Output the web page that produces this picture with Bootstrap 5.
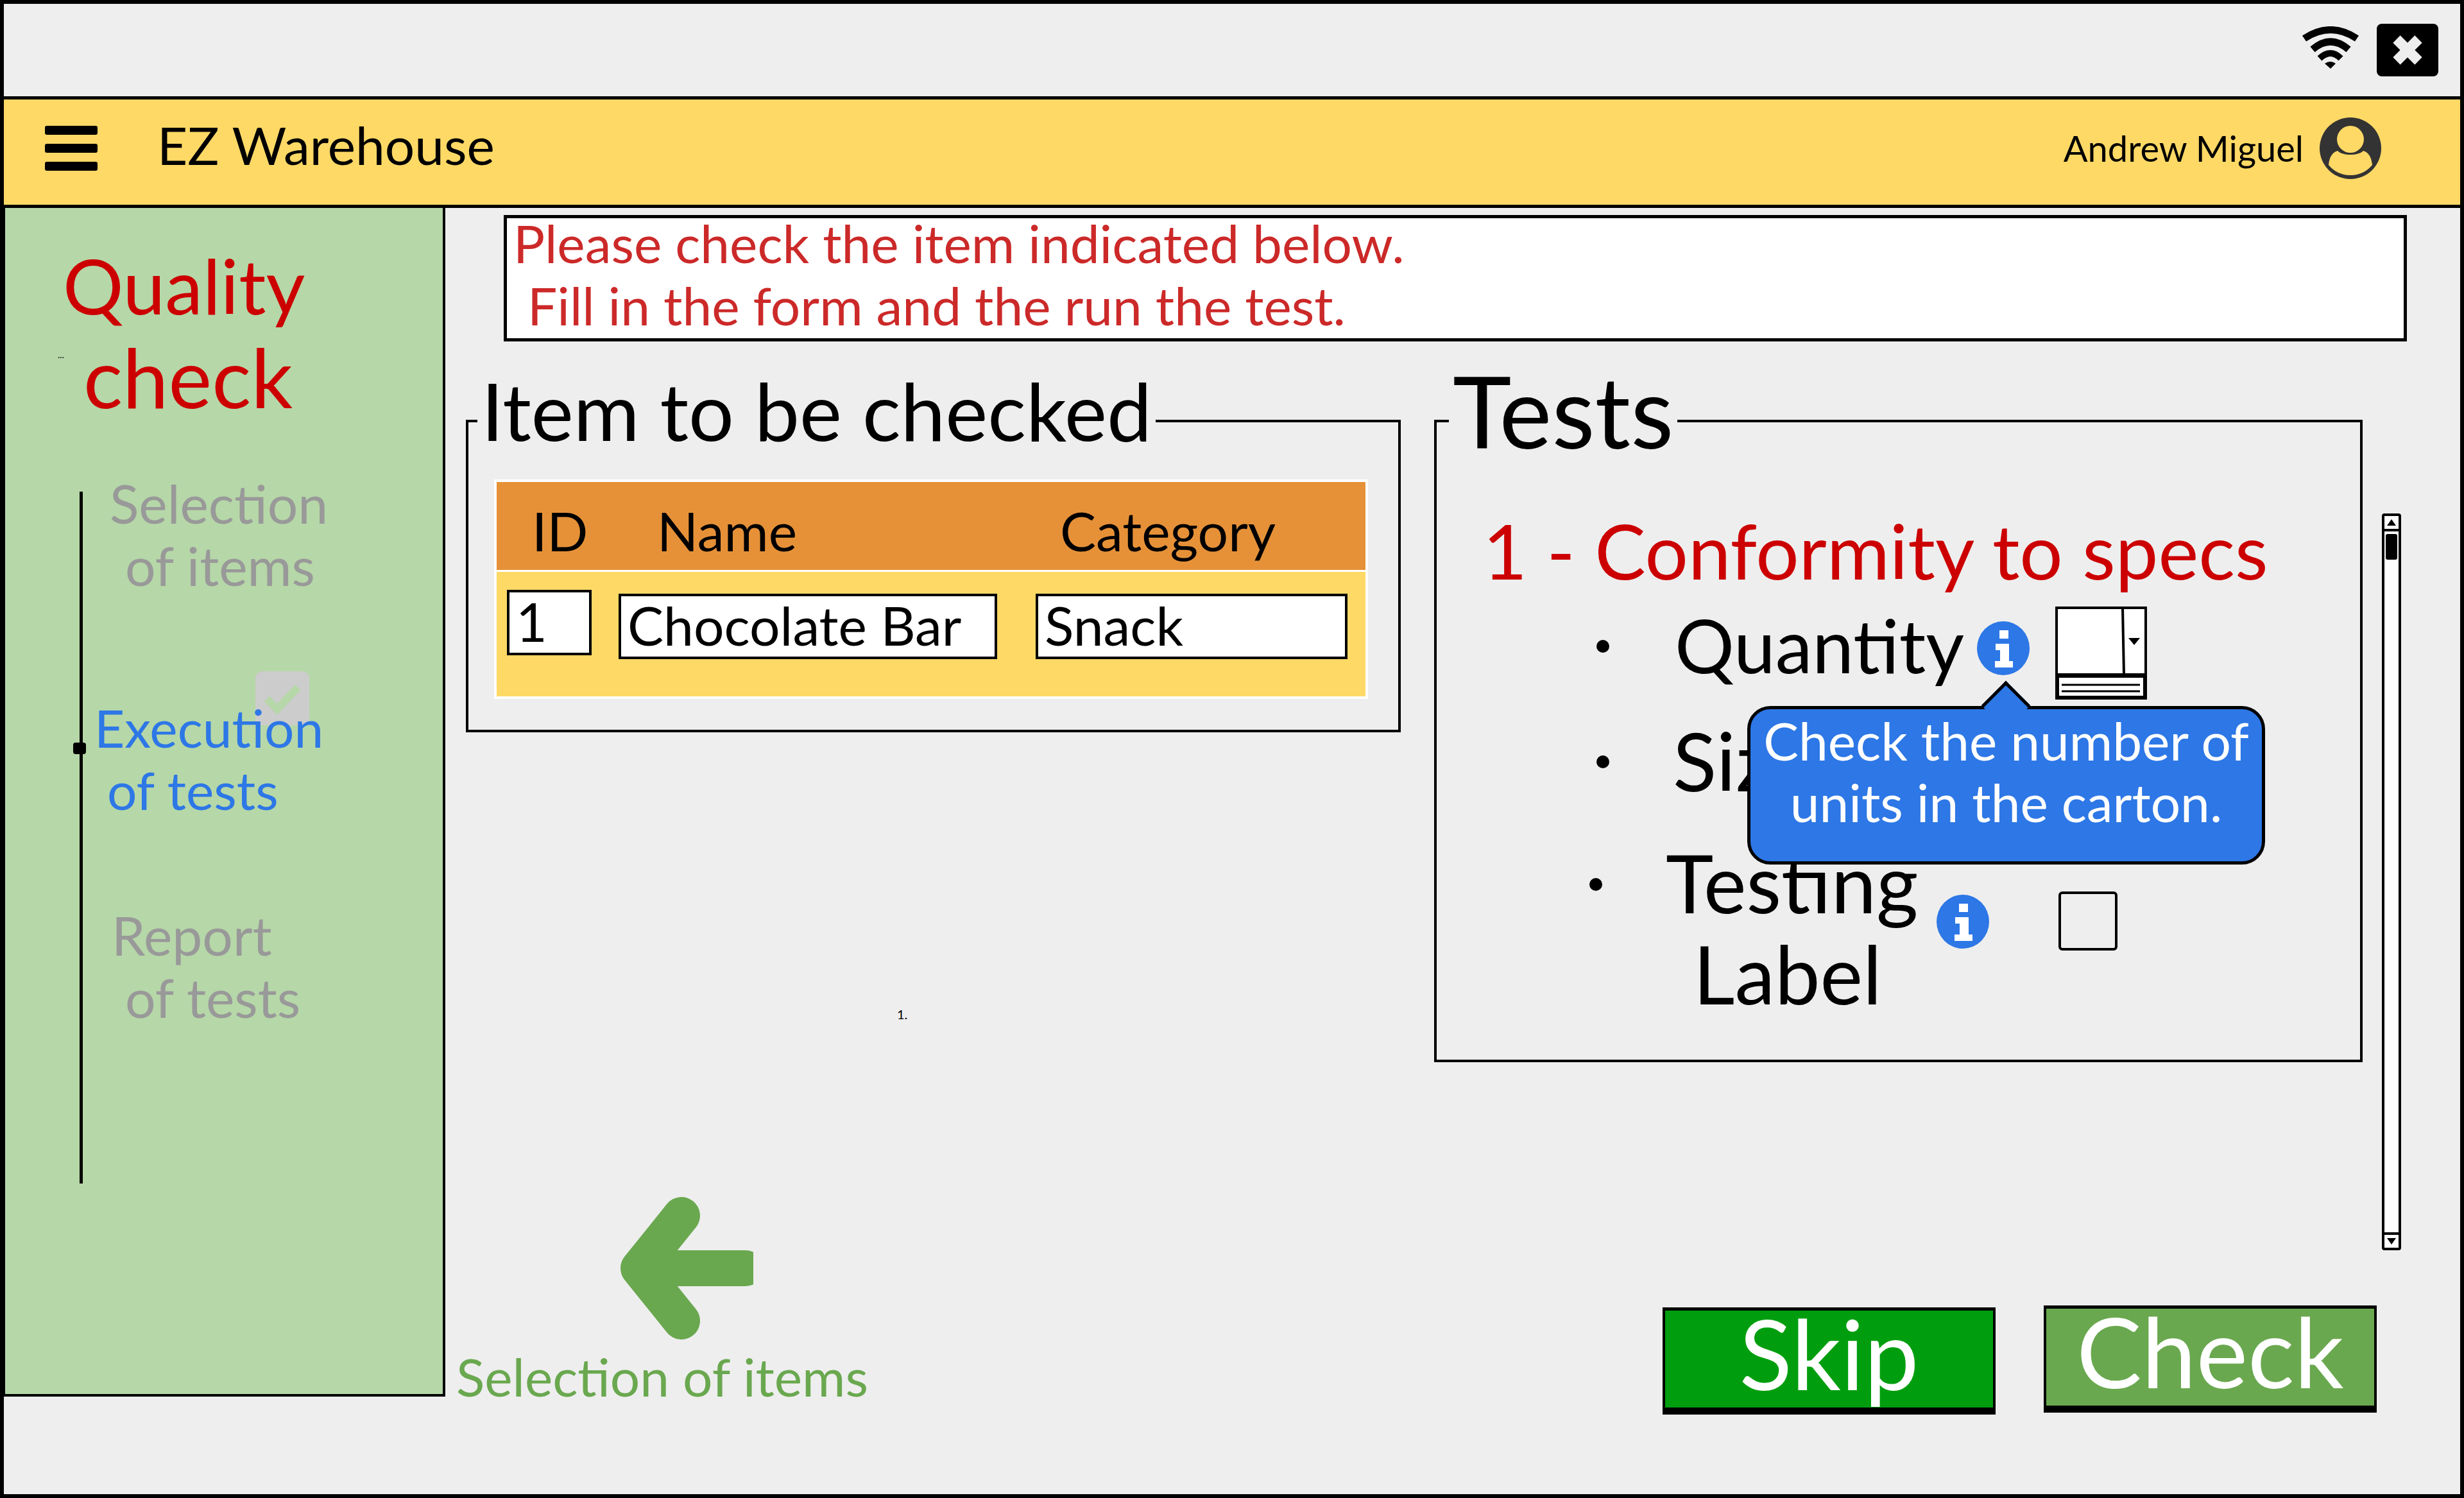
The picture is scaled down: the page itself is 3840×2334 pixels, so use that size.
<!DOCTYPE html>
<html lang="en">
<head>
    <meta charset="UTF-8">
    <meta name="viewport" content="width=device-width, initial-scale=1.0">
    <title>EZ Warehouse - Quality check</title>
    <link href="https://cdn.jsdelivr.net/npm/bootstrap@5.3.0/dist/css/bootstrap.min.css" rel="stylesheet">
    <style>
        body { margin: 0; background: #eee; font-family: "Lato", "Liberation Sans", sans-serif; color: #000; }
        .app-frame { width: 3840px; height: 2334px; border: 6px solid #000; background: #eee; overflow: hidden; }

        /* top strip */
        .status-strip { height: 144px; padding-right: 34px; gap: 26px; }
        .status-strip svg { margin-bottom: 8px; }
        .close-box { width: 96px; height: 82px; background: #000; border-radius: 8px; }
        .close-box svg { margin-bottom: 0; }

        /* yellow header */
        .app-header { height: 174px; background: #ffd966; border-top: 5px solid #000; border-bottom: 5px solid #000; padding: 0 123px 12px 64px; }
        .burger { width: 82px; gap: 14px; margin-right: 93px; }
        .burger span { height: 14px; background: #000; border-radius: 3px; }
        .app-title { font-size: 82px; line-height: 1; margin-bottom: 12px; }
        .user-name { font-size: 56px; margin-right: 25px; }

        /* sidebar */
        .side-panel { width: 688px; height: 1852px; background: #b6d7a8; border-right: 4px solid #000; border-bottom: 4px solid #000; border-left: 2px solid #000; padding-top: 50px; }
        .side-title { line-height: 142px; color: #c00; }
        .title-one { font-size: 118px; padding-left: 90px; }
        .title-two { font-size: 128px; padding-left: 122px; }
        .side-dots { left: 82px; top: 222px; font-size: 14px; line-height: 1; }
        .steps-rail { display: flow-root; margin: 108px 0 0 116px; height: 1078px; border-left: 5px solid #000; }
        .step-dot { left: -15px; top: 391px; width: 20px; height: 18px; background: #000; border-radius: 4px; }
        .step-list { margin-top: -31px; position: relative; z-index: 1; }
        .step-item { font-size: 84px; line-height: 97px; color: #999; height: 350px; }
        .step-item.on-step { color: #2d77e6; height: 323px; font-size: 82px; }
        .line-in-18 { padding-left: 18px; }
        .line-in-38 { padding-left: 38px; }
        .line-in-42 { padding-left: 42px; }
        .line-in-45 { padding-left: 45px; }
        .line-in-67 { padding-left: 66px; }
        .done-mark { left: 269px; top: 280px; width: 84px; height: 84px; background: #ccc; border-radius: 10px; }

        /* main */
        .main-area { padding-left: 32px; }
        .notice-box { margin: 11px 0 0 59px; width: 2966px; height: 197px; background: #fff; border: 5px solid #000; color: #cc2929; font-size: 82px; line-height: 97px; padding: 0 10px; }
        .notice-box div:first-child { margin-top: -10px; }
        .notice-box div + div { padding-left: 22px; }
        .work-row { margin-top: 59px; }
        .left-col { width: 1457px; }
        .right-col { width: 1447px; margin-left: 52px; }
        .box-set { border: 4px solid #000; margin: 0; padding: 0; min-width: 0; }
        .box-set legend { float: none; width: auto; position: relative; top: -17px; padding: 0 6px; font-size: 125px; line-height: 130px; }
        .left-set { height: 550px; padding: 26px 40px 0 40px; }
        .left-set legend { margin: 0 0 0 -26px; }

        /* item table */
        .item-table { width: 1362px; table-layout: fixed; border-collapse: separate; border-spacing: 0; border: 4px solid #fff; font-size: 84px; }
        .item-table th { background: #e69138; font-weight: 400; height: 140px; padding: 14px 0 0 55px; border-bottom: 3px solid #fff; line-height: 1; }
        .item-table td { background: #ffd966; height: 194px; padding: 0; vertical-align: top; line-height: 1; }
        .item-table .c-id { width: 195px; }
        .item-table .c-name { width: 650px; }
        .item-table th.c-cat { padding-left: 33px; }
        .cell-box { display: block; background: #fff; border: 4px solid #000; height: 102px; line-height: 90px; padding: 0 10px; white-space: nowrap; margin: 34px 0 0 -5px; }
        .cell-id { width: 132px; margin: 28px 0 0 16px; }
        .cell-name { width: 590px; }
        .cell-cat { width: 486px; }

        /* back link */
        .back-link { color: #6aa84f; font-size: 82px; line-height: 1; margin: 723px 0 0 -15px; }
        .back-link svg { margin-left: 251px; }
        .back-link span { margin-top: 15px; }
        .stray-num { left: 672px; top: 979px; font-size: 20px; line-height: 1; }

        /* tests */
        .tests-set { height: 1064px; padding: 0 0 0 72px; }
        .tests-set legend { font-size: 155px; margin: 0 0 0 -53px; }
        .spec-title { font-size: 119px; line-height: 120px; color: #c00; margin: 76px 0 28px 0; }
        .test-list { list-style: none; padding: 0; margin: 0; font-size: 126px; line-height: 142px; }
        .test-row { position: relative; }
        .test-bullet { width: 20px; height: 20px; background: #000; border-radius: 50%; position: absolute; }
        .row-quantity { height: 145px; padding-left: 299px; font-size: 116px; line-height: 120px; }
        .row-quantity .test-bullet { left: 177px; top: 52px; }
        .row-quantity .info-mark { margin: 23px 40px 0 20px; }
        .row-size { height: 214px; padding: 24px 0 0 296px; }
        .row-size .test-bullet { left: 177px; top: 87px; }
        .row-label { padding-left: 285px; }
        .row-label .test-bullet { left: 166px; top: 64px; }
        .row-label .info-mark { margin: 90px 0 0 28px; }
        .label-line { display: block; padding-right: 14px; }
        .hint-bubble { left: 412px; top: 155px; width: 807px; height: 247px; background: #2d77e6; color: #fff; border: 5px solid #000; border-radius: 36px; font-size: 82px; line-height: 96px; text-align: center; padding-top: 0; z-index: 2; }
        .hint-bubble::before { content: ""; position: absolute; top: -33px; left: 371px; width: 54px; height: 54px; background: #2d77e6; border-left: 5px solid #000; border-top: 5px solid #000; transform: rotate(45deg); }
        .empty-check { width: 92px; height: 92px; margin: 85px 0 0 108px; border: 4px solid #000; border-radius: 6px; }

        /* scrollbar */
        .fake-scroll { width: 30px; height: 1148px; margin: 209px 0 0 30px; background: #fff; border: 4px solid #000; border-radius: 4px; }
        .fake-scroll .arrow-cell { height: 24px; border-bottom: 4px solid #000; }
        .fake-scroll .arrow-down { border-bottom: 0; border-top: 4px solid #000; }
        .fake-thumb { height: 40px; width: 18px; background: #000; margin: 4px auto 0; border-radius: 3px; }

        /* action buttons */
        .action-btn { width: 519px; height: 167px; flex-shrink: 0; border-radius: 0; border: 4px solid #000; border-top-width: 5px; border-bottom-width: 11px; color: #fff; font-size: 152px; line-height: 130px; padding: 0 0 22px; }
        .skip-btn { background: #009e0f; margin-left: 356px; }
        .check-btn { background: #6aa84f; margin-left: 75px; margin-top: -3px; }
        .button-row { margin-top: 382px; }
    </style>
</head>
<body>
    <div class="app-frame d-flex flex-column">
        <!-- strip with wifi and close -->
        <div class="status-strip d-flex justify-content-end align-items-center">
            <svg width="92" height="66" viewBox="0 0 92 66" aria-hidden="true">
                <path d="M5 19 Q46 -8 87 19" fill="none" stroke="#000" stroke-width="11"/>
                <path d="M18 36 Q46 12 74 36" fill="none" stroke="#000" stroke-width="11"/>
                <path d="M29 50 Q46 34 62 50" fill="none" stroke="#000" stroke-width="10"/>
                <path d="M37 58 Q46 52 54 58 L46 66 Z" fill="#000"/>
            </svg>
            <div class="close-box d-flex align-items-center justify-content-center">
                <svg width="48" height="48" viewBox="0 0 48 48" aria-hidden="true">
                    <path d="M7 7 L41 41 M41 7 L7 41" stroke="#eee" stroke-width="16"/>
                </svg>
            </div>
        </div>

        <!-- header -->
        <nav class="app-header d-flex align-items-center">
            <div class="burger d-flex flex-column">
                <span></span><span></span><span></span>
            </div>
            <div class="app-title">EZ Warehouse</div>
            <div class="ms-auto d-flex align-items-center">
                <span class="user-name">Andrew Miguel</span>
                <svg width="96" height="96" viewBox="0 0 96 96" aria-hidden="true">
                    <circle cx="48" cy="48" r="48" fill="#333"/>
                    <circle cx="48" cy="34" r="21" fill="#ffd966"/>
                    <path d="M14 74 C15 62 20 54 28 52 C36 60 60 60 68 52 C76 54 81 62 82 74 C74 84 62 90 48 90 C34 90 22 84 14 74 Z" fill="#ffd966"/>
                </svg>
            </div>
        </nav>

        <div class="d-flex flex-grow-1">
            <!-- sidebar -->
            <aside class="side-panel position-relative flex-shrink-0">
                <div class="side-title title-one">Quality</div>
                <div class="side-title title-two">check</div>
                <div class="side-dots position-absolute">...</div>
                <div class="steps-rail position-relative">
                    <div class="step-dot position-absolute"></div>
                    <div class="done-mark position-absolute d-flex align-items-center justify-content-center">
                        <svg width="60" height="50" viewBox="0 0 60 50" aria-hidden="true">
                            <path d="M6 26 L22 42 L54 8" fill="none" stroke="#b6d7a8" stroke-width="12"/>
                        </svg>
                    </div>
                    <div class="step-list">
                        <div class="step-item">
                            <div class="line-in-42">Selection</div>
                            <div class="line-in-67">of items</div>
                        </div>
                        <div class="step-item on-step">
                            <div class="line-in-18">Execution</div>
                            <div class="line-in-38">of tests</div>
                        </div>
                        <div class="step-item">
                            <div class="line-in-45">Report</div>
                            <div class="line-in-67">of tests</div>
                        </div>
                    </div>
                </div>
            </aside>

            <!-- main area -->
            <main class="main-area flex-grow-1">
                <div class="notice-box">
                    <div>Please check the item indicated below.</div>
                    <div>Fill in the form and the run the test.</div>
                </div>

                <div class="work-row d-flex">
                    <section class="left-col position-relative">
                        <fieldset class="box-set left-set">
                            <legend>Item to be checked</legend>
                            <table class="item-table">
                                <thead>
                                    <tr><th class="c-id">ID</th><th class="c-name">Name</th><th class="c-cat">Category</th></tr>
                                </thead>
                                <tbody>
                                    <tr>
                                        <td><span class="cell-box cell-id">1</span></td>
                                        <td><span class="cell-box cell-name">Chocolate Bar</span></td>
                                        <td><span class="cell-box cell-cat">Snack</span></td>
                                    </tr>
                                </tbody>
                            </table>
                        </fieldset>
                        <div class="stray-num position-absolute">1.</div>
                        <div class="back-link d-flex flex-column">
                            <svg width="212" height="224" viewBox="0 0 212 224" aria-hidden="true">
                                <path d="M100 30 L34 112 L100 194" fill="none" stroke="#6aa84f" stroke-width="58" stroke-linecap="round" stroke-linejoin="round"/>
                                <path d="M50 112 L200 112" fill="none" stroke="#6aa84f" stroke-width="56" stroke-linecap="round"/>
                            </svg>
                            <span>Selection of items</span>
                        </div>
                    </section>

                    <section class="right-col">
                        <fieldset class="box-set tests-set">
                            <legend>Tests</legend>
                            <div class="spec-title">1 - Conformity to specs</div>
                            <ul class="test-list">
                                <li class="test-row row-quantity d-flex align-items-start">
                                    <i class="test-bullet"></i>
                                    <span>Quantity</span>
                                    <svg class="info-mark" width="82" height="84" viewBox="0 0 82 84" aria-hidden="true">
                                        <ellipse cx="41" cy="42" rx="41" ry="42" fill="#2d77e6"/>
                                        <path d="M35 14 H49 V27 H35 Z M29 35 H50 V62 H56 V72 H28 V62 H36 V45 H29 Z" fill="#fff"/>
                                    </svg>
                                    <svg width="143" height="145" viewBox="0 0 143 145" aria-hidden="true">
                                        <rect x="2" y="2" width="139" height="104" fill="#fff" stroke="#000" stroke-width="4"/>
                                        <path d="M105 2 L107 106" stroke="#000" stroke-width="4"/>
                                        <path d="M114 49 H132 L123 60 Z" fill="#000"/>
                                        <rect x="3" y="108" width="137" height="34" fill="#fff" stroke="#000" stroke-width="6"/>
                                        <path d="M10 122 H132 M10 132 H132" stroke="#000" stroke-width="3"/>
                                    </svg>
                                    <div class="hint-bubble position-absolute">Check the number of<br>units in the carton.</div>
                                </li>
                                <li class="test-row row-size">
                                    <i class="test-bullet"></i>
                                    <span>Size</span>
                                </li>
                                <li class="test-row row-label d-flex align-items-start">
                                    <i class="test-bullet"></i>
                                    <div class="text-center">Testing<span class="label-line">Label</span></div>
                                    <svg class="info-mark" width="82" height="84" viewBox="0 0 82 84" aria-hidden="true">
                                        <ellipse cx="41" cy="42" rx="41" ry="42" fill="#2d77e6"/>
                                        <path d="M35 14 H49 V27 H35 Z M29 35 H50 V62 H56 V72 H28 V62 H36 V45 H29 Z" fill="#fff"/>
                                    </svg>
                                    <div class="empty-check"></div>
                                </li>
                            </ul>
                        </fieldset>
                        <div class="button-row d-flex">
                            <button type="button" class="btn action-btn skip-btn">Skip</button>
                            <button type="button" class="btn action-btn check-btn">Check</button>
                        </div>
                    </section>

                    <div class="fake-scroll d-flex flex-column justify-content-between">
                        <div>
                            <div class="arrow-cell d-flex justify-content-center align-items-center">
                                <svg width="14" height="10" viewBox="0 0 14 10" aria-hidden="true"><path d="M7 0 L14 10 H0 Z"/></svg>
                            </div>
                            <div class="fake-thumb"></div>
                        </div>
                        <div class="arrow-cell arrow-down d-flex justify-content-center align-items-center">
                            <svg width="14" height="10" viewBox="0 0 14 10" aria-hidden="true"><path d="M0 0 H14 L7 10 Z"/></svg>
                        </div>
                    </div>
                </div>
            </main>
        </div>
    </div>
    <script src="https://cdn.jsdelivr.net/npm/bootstrap@5.3.0/dist/js/bootstrap.bundle.min.js"></script>
</body>
</html>
